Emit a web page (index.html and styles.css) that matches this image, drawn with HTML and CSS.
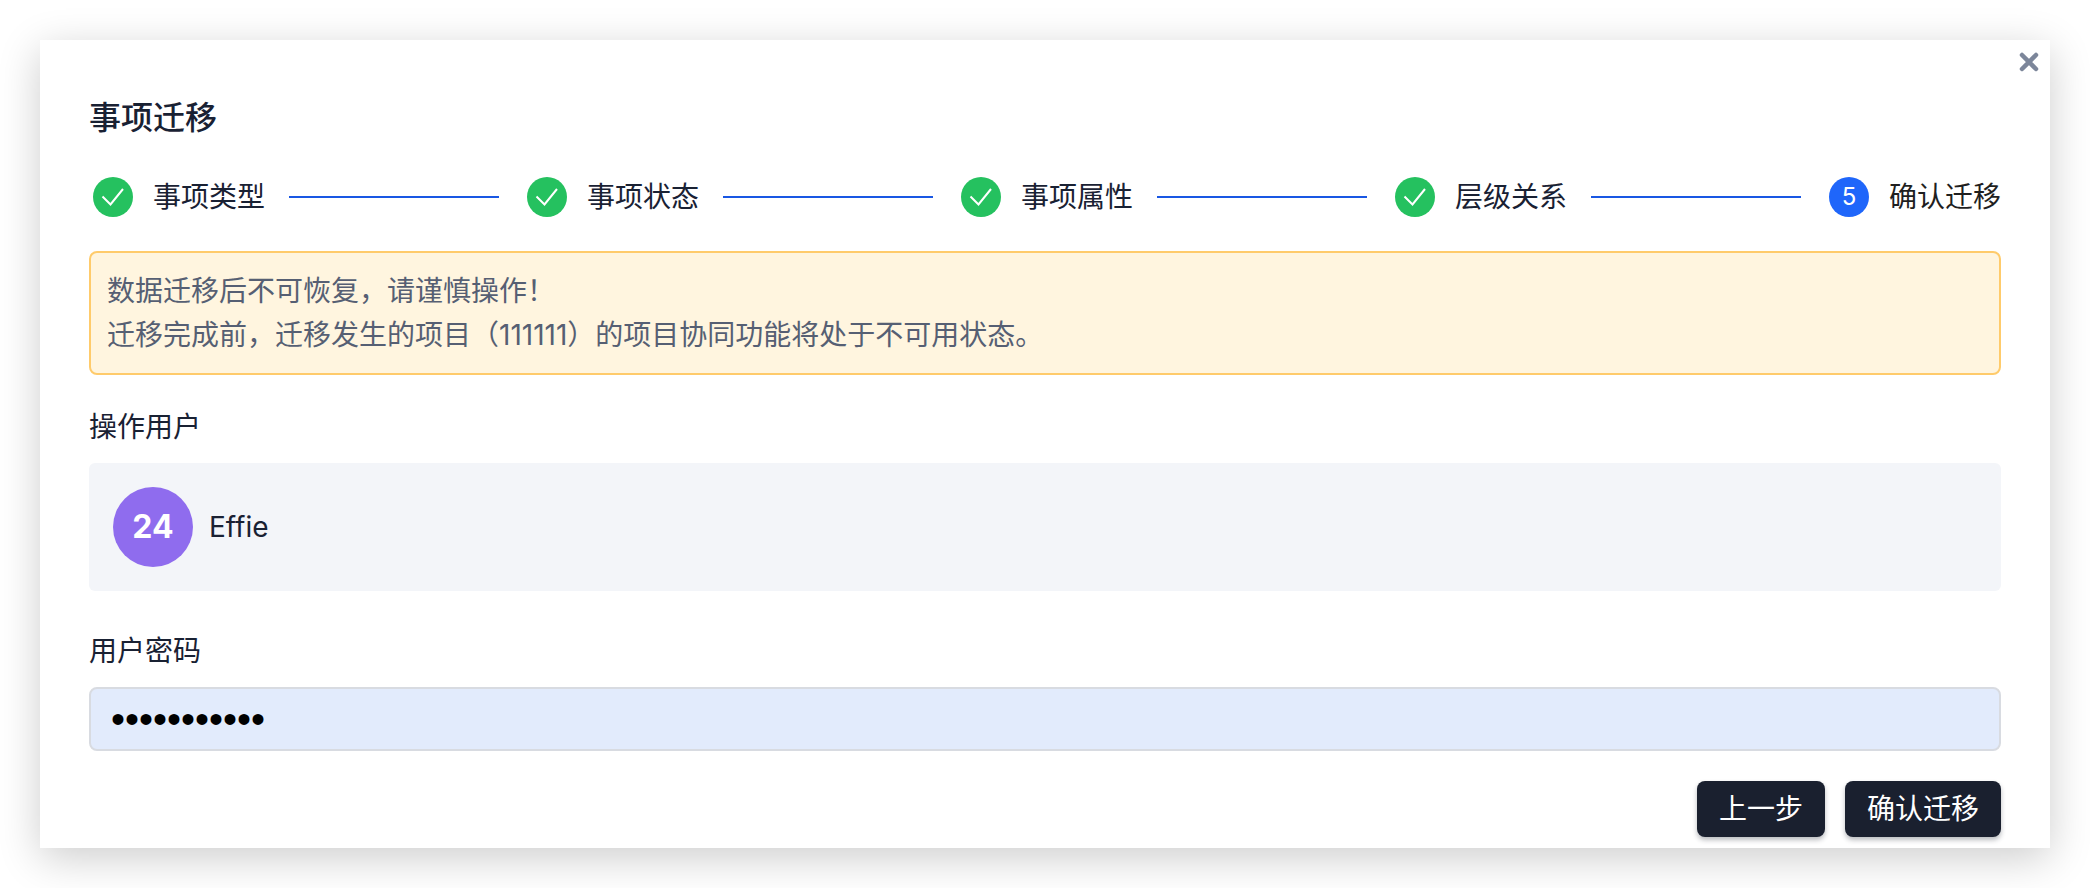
FILE: index.html
```html
<!DOCTYPE html>
<html lang="zh-CN">
<head>
    <meta charset="UTF-8">
    <meta name="viewport" content="width=device-width, initial-scale=1.0">
    <title>事项迁移</title>
    <link rel="stylesheet" href="styles.css">
</head>
<body>
    <div class="modal" role="dialog" aria-labelledby="modalTitle">
        <button class="close" type="button" aria-label="关闭">
            <svg width="20" height="20" viewBox="0 0 20 20"><path d="M3 3l14 14M17 3L3 17"/></svg>
        </button>

        <h1 id="modalTitle">事项迁移</h1>

        <ol class="steps">
            <li class="step done">
                <span class="step-icon"><svg width="24" height="24" viewBox="0 0 24 24"><path d="M1.500 11.500l8 8L22 4"/></svg></span>
                <span>事项类型</span>
            </li>
            <li class="step done">
                <span class="step-icon"><svg width="24" height="24" viewBox="0 0 24 24"><path d="M1.500 11.500l8 8L22 4"/></svg></span>
                <span>事项状态</span>
            </li>
            <li class="step done">
                <span class="step-icon"><svg width="24" height="24" viewBox="0 0 24 24"><path d="M1.500 11.500l8 8L22 4"/></svg></span>
                <span>事项属性</span>
            </li>
            <li class="step done">
                <span class="step-icon"><svg width="24" height="24" viewBox="0 0 24 24"><path d="M1.500 11.500l8 8L22 4"/></svg></span>
                <span>层级关系</span>
            </li>
            <li class="step current">
                <span class="step-icon">5</span>
                <span>确认迁移</span>
            </li>
        </ol>

        <div class="alert">
            <p>数据迁移后不可恢复，请谨慎操作！</p>
            <p>迁移完成前，迁移发生的项目（111111）的项目协同功能将处于不可用状态。</p>
        </div>

        <form>
            <div class="form-group">
                <div class="label">操作用户</div>
                <div class="user">
                    <span class="avatar">24</span>
                    <span>Effie</span>
                </div>
            </div>

            <div class="form-group">
                <label class="label" for="password">用户密码</label>
                <input type="password" id="password" value="effie123456">
            </div>

            <div class="actions">
                <button class="btn" type="button">上一步</button>
                <button class="btn" type="submit">确认迁移</button>
            </div>
        </form>
    </div>
</body>
</html>
```
FILE: styles.css
```css
* {
    box-sizing: border-box;
}
body {
    margin: 0;
    padding: 40px;
    background-color: #fff;
    color: #192133;
    font-family: Inter, "Noto Sans CJK SC", sans-serif;
    font-size: 28px;
    line-height: 44px;
}
.modal {
    position: relative;
    padding: 56px 49px 11px;
    background-color: #fff;
    box-shadow: 0 10px 40px rgba(0, 0, 0, 0.2);
}
.close {
    position: absolute;
    top: 12px;
    right: 11px;
    display: flex;
    padding: 0;
    border: none;
    background: none;
    cursor: pointer;
}
.close path {
    fill: none;
    stroke: #7c869a;
    stroke-width: 4.5;
    stroke-linecap: round;
}
h1 {
    margin: 0 0 35px;
    font-size: 32px;
    font-weight: 500;
    line-height: 44px;
}

/* Steps */
.steps {
    display: flex;
    margin: 0 0 32px;
    padding: 0;
    list-style: none;
}
.step {
    display: flex;
    align-items: center;
    flex: 1;
    padding-left: 4px;
    white-space: nowrap;
}
.step:last-child {
    flex: none;
}
.step:not(:last-child)::after {
    content: "";
    flex: 1;
    height: 2px;
    margin: 0 24px;
    background-color: #1957e3;
}
.step-icon {
    display: flex;
    align-items: center;
    justify-content: center;
    width: 40px;
    height: 40px;
    margin-right: 20px;
    border-radius: 50%;
    background-color: #25c15f;
    color: #fff;
    font-size: 24px;
}
.step-icon path {
    fill: none;
    stroke: #fff;
    stroke-width: 2;
}
.current {
    color: #1f1f1f;
}
.current .step-icon {
    background-color: #1f66fa;
}

/* Warning */
.alert {
    margin-bottom: 30px;
    padding: 16px;
    border: 2px solid #ffcb6b;
    border-radius: 8px;
    background-color: #fff5df;
    color: #565f73;
}
.alert p {
    margin: 0;
}

/* Form */
.form-group + .form-group {
    margin-top: 38px;
}
.label {
    display: block;
    margin-bottom: 14px;
}
.user {
    display: flex;
    align-items: center;
    gap: 16px;
    padding: 24px;
    border-radius: 6px;
    background-color: #f3f5f9;
}
.avatar {
    display: flex;
    align-items: center;
    justify-content: center;
    width: 80px;
    height: 80px;
    border-radius: 50%;
    background-color: #8f6cee;
    color: #fff;
    font-size: 32px;
    font-weight: 700;
}
input {
    display: block;
    width: 100%;
    height: 64px;
    padding: 0 20px;
    border: 2px solid #d8dbe1;
    border-radius: 8px;
    background-color: #e2ebfc;
    color: #000;
    font-family: "Liberation Sans", sans-serif;
    font-size: 40px;
}
.actions {
    display: flex;
    justify-content: flex-end;
    gap: 20px;
    margin-top: 30px;
}
.btn {
    height: 56px;
    padding: 0 22px;
    border: none;
    border-radius: 8px;
    background-color: #1a202f;
    box-shadow: 0 3px 5px rgba(26, 32, 47, 0.3);
    color: #fff;
    font: inherit;
    cursor: pointer;
}
```
